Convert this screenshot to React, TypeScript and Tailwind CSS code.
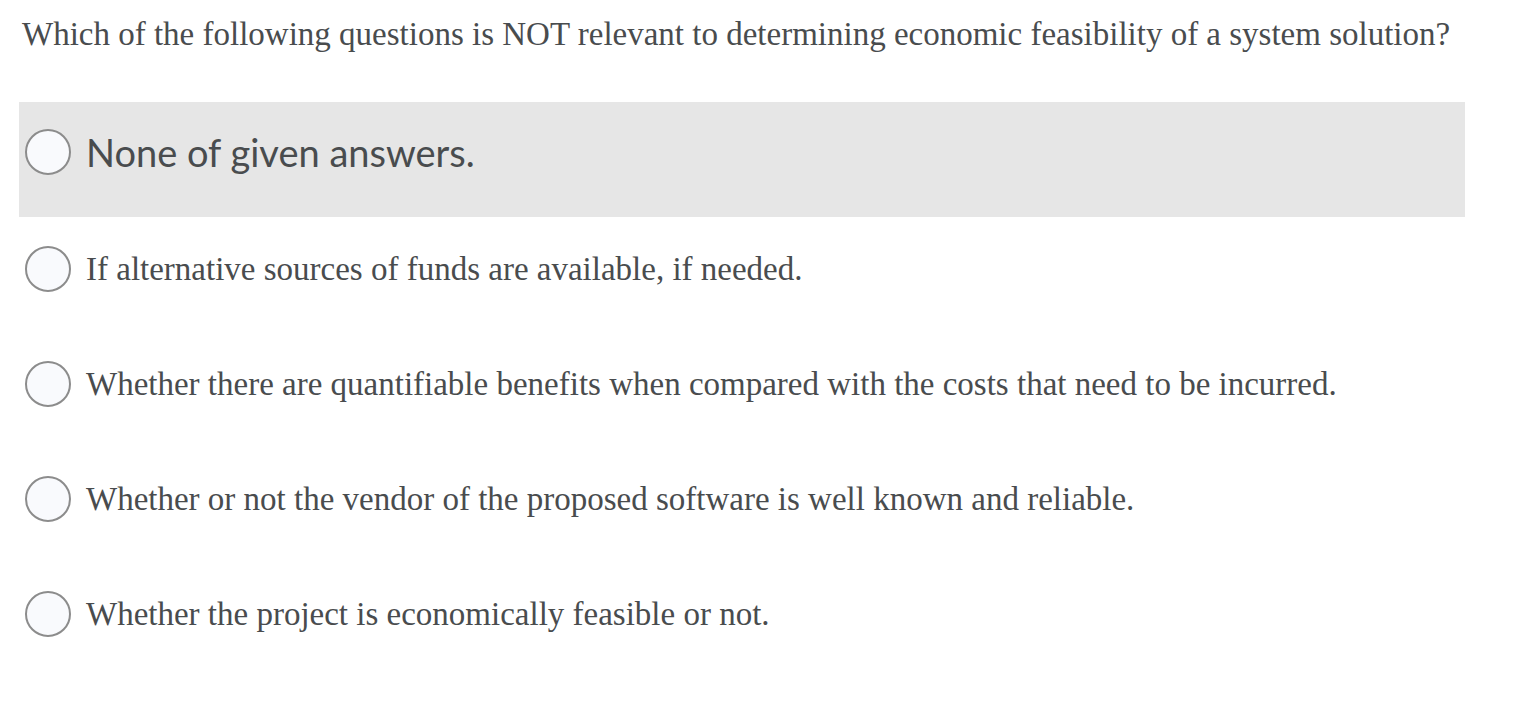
const options = [
  "None of given answers.",
  "If alternative sources of funds are available, if needed.",
  "Whether there are quantifiable benefits when compared with the costs that need to be incurred.",
  "Whether or not the vendor of the proposed software is well known and reliable.",
  "Whether the project is economically feasible or not.",
];

function Radio() {
  return (
    <span className="shrink-0 w-[46px] h-[46px] rounded-full border-2 border-[#8c8c8c] bg-[#f9fafd]" />
  );
}

export default function App() {
  return (
    <div className="min-h-screen bg-white text-[#494c4e] pl-[19px] pr-[55px] pt-[14px]">
      <h1 className="font-['Liberation_Serif',serif] text-[33px] leading-[40px] pl-[3px] mb-[48px]">
        Which of the following questions is NOT relevant to determining economic feasibility of a system solution?
      </h1>
      <div className="flex flex-col">
        {options.map((opt, i) => (
          <label
            key={opt}
            className={`flex items-start h-[115px] pl-[6px] ${i === 0 ? "bg-[#e6e6e6] pt-[27px]" : "pt-[29px]"}`}
          >
            <span className="flex items-center h-[46px] gap-[15px]">
              <Radio />
              {i === 0 ? (
                <span className="font-['Lato',sans-serif] text-[38px] leading-none">{opt}</span>
              ) : (
                <span className="font-['Liberation_Serif',serif] text-[33px] leading-none">{opt}</span>
              )}
            </span>
          </label>
        ))}
      </div>
    </div>
  );
}
